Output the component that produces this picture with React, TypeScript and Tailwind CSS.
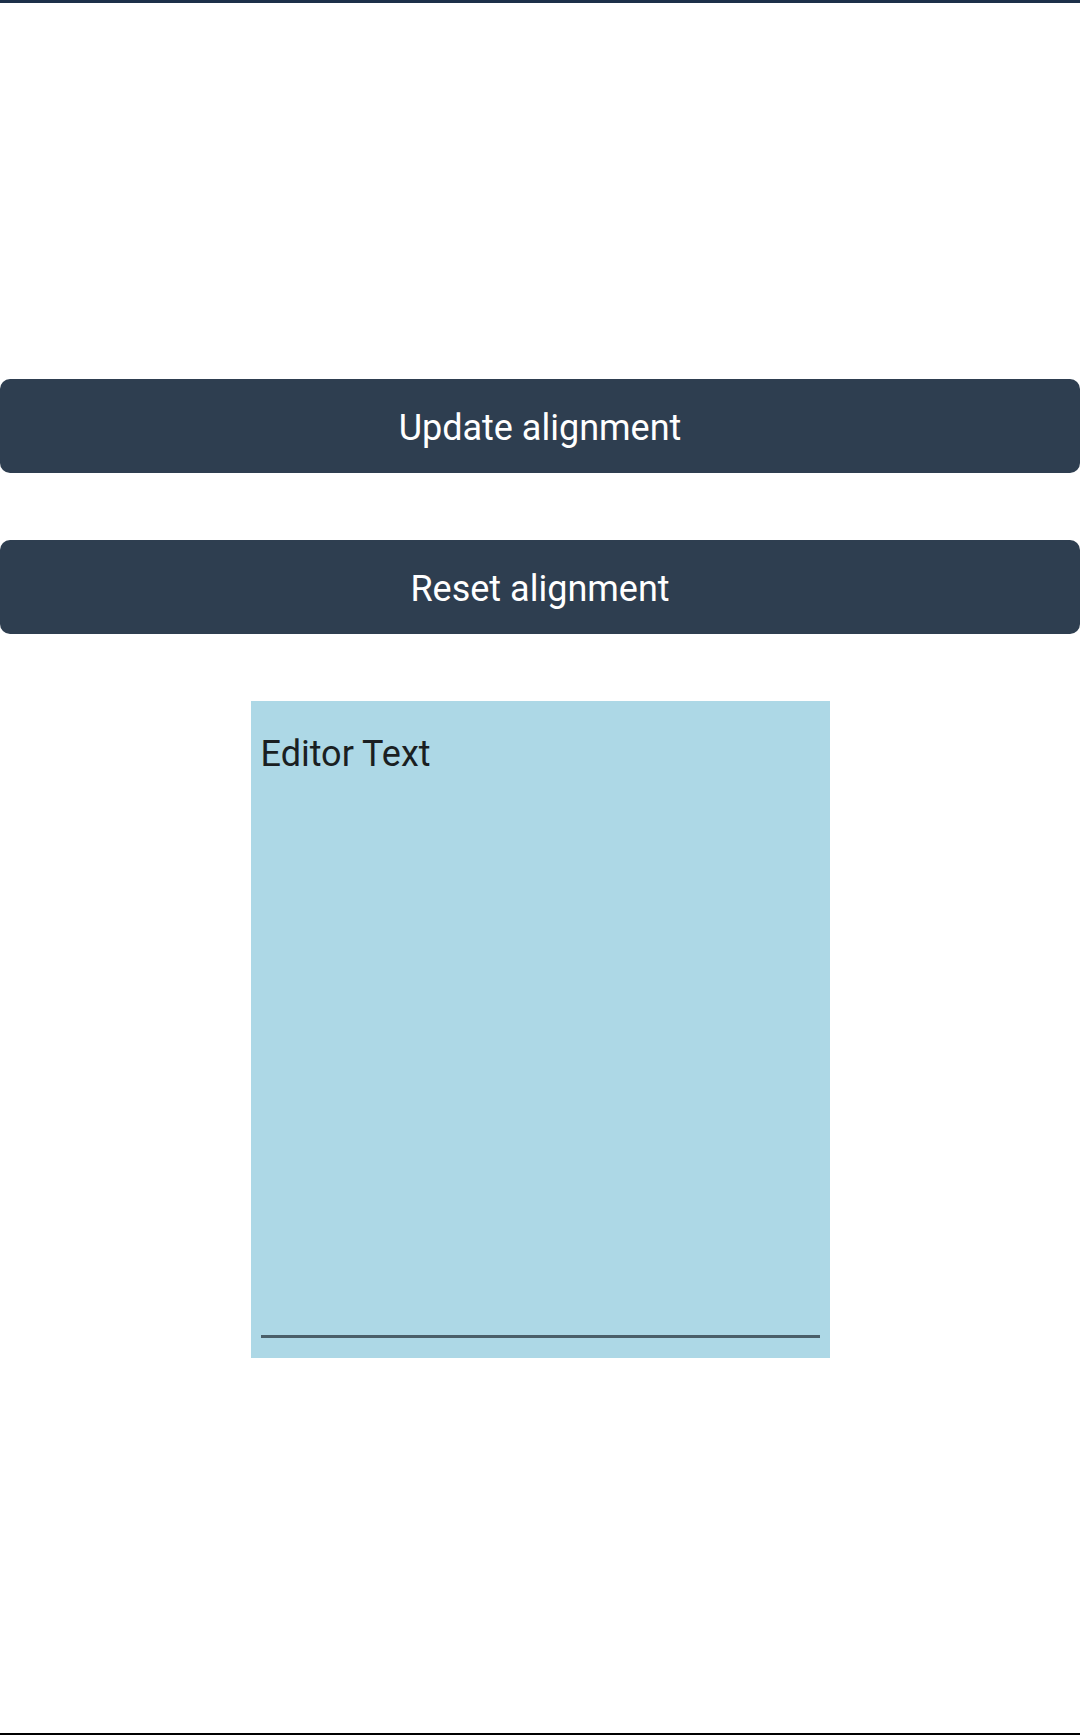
export default function App() {
  return (
    <div className="w-[1080px] h-[1735px] bg-white flex flex-col border-t-[3px] border-t-[#1c3049] border-b-2 border-b-black" style={{ fontFamily: "Roboto, sans-serif" }}>
      <div className="h-[376px]" />
      <button className="h-[94px] w-full rounded-[10px] bg-[#2e3e50] text-white text-[36px] leading-none flex items-center justify-center pt-[4px]">
        Update alignment
      </button>
      <div className="h-[67px]" />
      <button className="h-[94px] w-full rounded-[10px] bg-[#2e3e50] text-white text-[36px] leading-none flex items-center justify-center pt-[4px]">
        Reset alignment
      </button>
      <div className="h-[67px]" />
      <div className="mx-auto w-[579px] h-[657px] bg-[#add8e6] flex flex-col px-[10px]">
        <div className="mt-[31px] text-[36px] leading-[44px] text-[#1a1f22]">Editor Text</div>
        <div className="flex-1" />
        <div className="h-[3px] bg-[#4a5f69] mb-[20px]" />
      </div>
    </div>
  );
}
